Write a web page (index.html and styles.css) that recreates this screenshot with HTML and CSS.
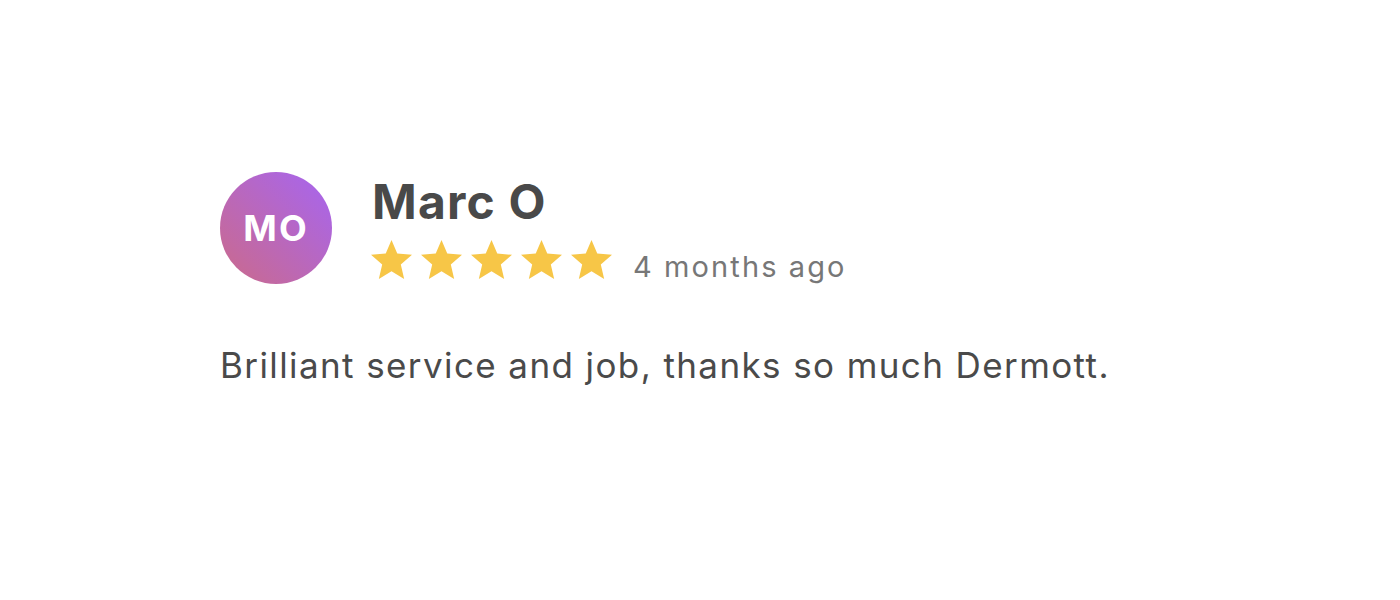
FILE: index.html
```html
<!DOCTYPE html>
<html lang="en">
<head>
  <meta charset="UTF-8" />
  <meta name="viewport" content="width=device-width, initial-scale=1.0"/>
  <title>Review</title>
  <link rel="stylesheet" href="styles.css">
</head>
<body>
  <div class="review">
    <div class="review-head">
      <div class="avatar">MO</div>
      <div class="meta">
        <div class="name">Marc O</div>
        <div class="rating">
          <div class="stars">
            <svg class="star" viewBox="2 2 20 19"><path d="M12 17.27L18.18 21l-1.64-7.03L22 9.24l-7.19-.61L12 2 9.19 8.63 2 9.24l5.46 4.73L5.82 21z"/></svg>
            <svg class="star" viewBox="2 2 20 19"><path d="M12 17.27L18.18 21l-1.64-7.03L22 9.24l-7.19-.61L12 2 9.19 8.63 2 9.24l5.46 4.73L5.82 21z"/></svg>
            <svg class="star" viewBox="2 2 20 19"><path d="M12 17.27L18.18 21l-1.64-7.03L22 9.24l-7.19-.61L12 2 9.19 8.63 2 9.24l5.46 4.73L5.82 21z"/></svg>
            <svg class="star" viewBox="2 2 20 19"><path d="M12 17.27L18.18 21l-1.64-7.03L22 9.24l-7.19-.61L12 2 9.19 8.63 2 9.24l5.46 4.73L5.82 21z"/></svg>
            <svg class="star" viewBox="2 2 20 19"><path d="M12 17.27L18.18 21l-1.64-7.03L22 9.24l-7.19-.61L12 2 9.19 8.63 2 9.24l5.46 4.73L5.82 21z"/></svg>
          </div>
          <span class="time">4 months ago</span>
        </div>
      </div>
    </div>
    <p class="text">Brilliant service and job, thanks so much Dermott.</p>
  </div>
</body>
</html>
```

FILE: styles.css
```css
body {
  margin: 0;
  background: #fff;
  font-family: Inter, "Noto Sans", sans-serif;
  color: #4a4a4a;
}
.review {
  padding: 172px 0 0 220px;
}
.review-head {
  display: flex;
  align-items: flex-start;
  gap: 40px;
}
.avatar {
  width: 112px;
  height: 112px;
  border-radius: 50%;
  background: linear-gradient(45deg, #cb6a8a, #a665f2);
  color: #fff;
  font-size: 36px;
  font-weight: 700;
  letter-spacing: 2px;
  display: flex;
  align-items: center;
  justify-content: center;
  flex-shrink: 0;
}
.meta {
  margin-top: 6px;
}
.name {
  font-size: 48px;
  line-height: 48px;
  font-weight: 700;
  letter-spacing: 1.2px;
  color: #494949;
}
.rating {
  display: flex;
  align-items: flex-end;
  margin-top: 14px;
}
.stars {
  display: flex;
  gap: 9px;
  margin-left: -1px;
}
.star {
  width: 41px;
  height: 39px;
  fill: #f7c647;
}
.time {
  margin: 0 0 -2px 21px;
  font-size: 29px;
  line-height: 29px;
  letter-spacing: 2.1px;
  color: #777;
}
.text {
  margin: 57px 0 0;
  font-size: 35px;
  line-height: 49px;
  letter-spacing: 1.4px;
  color: #4a4a4a;
}
```
